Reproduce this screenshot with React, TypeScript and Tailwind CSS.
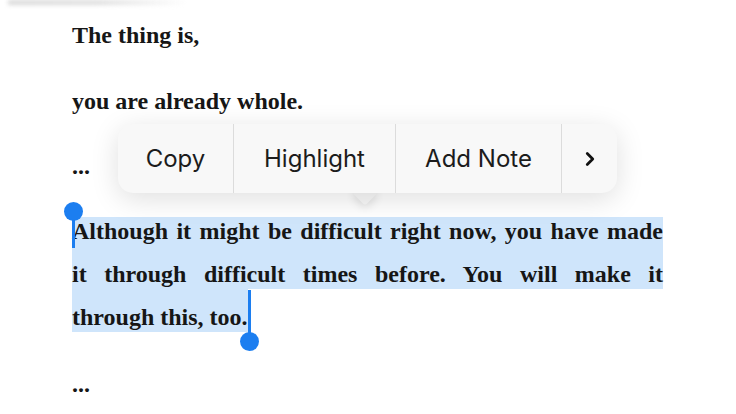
import { ChevronRight } from 'lucide-react'

const serif = "font-['Liberation_Serif','DejaVu_Serif',serif] font-bold text-[24px] leading-[29px] text-[#161616]"

function Handle({ top, left, lineTop, lineHeight }: { top: number; left: number; lineTop: number; lineHeight: number }) {
  return (
    <>
      <div className="absolute w-[3px] bg-[#1c7ef0]" style={{ left: left - 1.5, top: lineTop, height: lineHeight }} />
      <div className="absolute w-[19px] h-[19px] rounded-full bg-[#1c7ef0]" style={{ left: left - 9.5, top: top - 9.5 }} />
    </>
  )
}

function EditMenu() {
  const items = [
    { label: 'Copy', w: 'w-[116px]' },
    { label: 'Highlight', w: 'w-[162px]' },
    { label: 'Add Note', w: 'w-[166px]' },
  ]
  return (
    <div className="absolute left-[118px] top-[124px]">
      {/* pointer */}
      <div className="absolute left-[238px] top-[60px] w-[18px] h-[18px] rotate-45 rounded-[3px] bg-[#f8f8f8] shadow-[2px_2px_10px_rgba(0,0,0,0.12)]" />
      <div className="relative flex h-[69px] rounded-[15px] bg-[#f8f8f8] shadow-[0_6px_28px_rgba(0,0,0,0.13)] font-['Inter','Liberation_Sans',sans-serif] text-[24px] text-[#1c1c1c]">
        {items.map((it) => (
          <div key={it.label} className={`${it.w} flex items-center justify-center border-r border-[#dcdcdc]`}>
            {it.label}
          </div>
        ))}
        <div className="w-[55px] flex items-center justify-center">
          <ChevronRight size={22} strokeWidth={3} className="text-[#111]" />
        </div>
      </div>
    </div>
  )
}

export default function App() {
  return (
    <div className="relative w-[736px] h-[414px] overflow-hidden bg-white">
      {/* faint bar at top edge */}
      <div className="h-[5px] w-[180px] ml-[8px] bg-gradient-to-r from-[#d9d9d9] via-[#dedede] to-transparent blur-[2px]" />

      <div className={`${serif} ml-[72px] w-[591px] flex flex-col`}>
        <div className="mt-[16px]">The thing is,</div>
        <div className="mt-[37px]">you are already whole.</div>
        <div className="mt-[36px]">...</div>

        <div className="mt-[36px] text-justify [text-align-last:justify] bg-[#cfe5fb]">
          Although it might be difficult right now, you have made
        </div>
        <div className="pt-[14px] text-justify [text-align-last:justify] bg-[#cfe5fb]">
          it through difficult times before. You will make it
        </div>
        <div>
          <span className="inline-block pt-[14px] bg-[#cfe5fb]">through this, too.</span>
        </div>

        <div className="mt-[38px]">...</div>
      </div>

      <Handle left={73.5} top={211} lineTop={211} lineHeight={37} />
      <Handle left={249.5} top={341} lineTop={290} lineHeight={50} />

      <EditMenu />
    </div>
  )
}
